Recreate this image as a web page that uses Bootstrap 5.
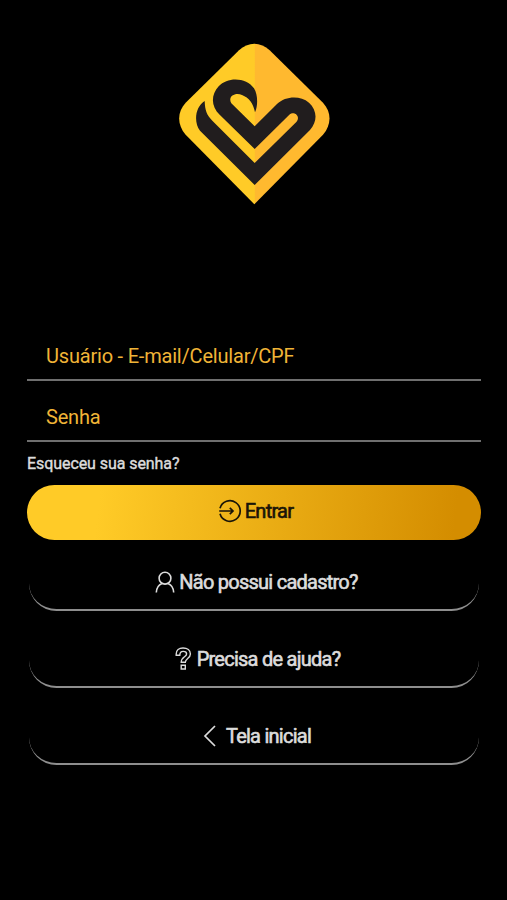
<!DOCTYPE html>
<html lang="pt-BR">
<head>
<meta charset="utf-8">
<meta name="viewport" content="width=device-width, initial-scale=1">
<title>Entrar</title>
<link href="https://cdn.jsdelivr.net/npm/bootstrap@5.3.0/dist/css/bootstrap.min.css" rel="stylesheet">
<style>
body{background:#000;font-family:Roboto,"Liberation Sans",sans-serif;color:#dcdcdc}
.screen{height:900px;padding:35px 26px 0 27px;overflow:hidden}
.brand-mark{display:block;margin:0 auto;width:170px;height:180px;transform:translateX(1px)}
.login-form{margin-top:117px}
.field{height:49px;border-bottom:2px solid #6f6f6f;padding:12px 0 0 19px;color:#f0b437;font-size:20px;line-height:24px;letter-spacing:-.2px}
.field + .field{margin-top:12px}
.field label{display:block;white-space:nowrap}
.forgot{display:block;margin-top:12px;font-size:16px;line-height:20px;letter-spacing:-.07px;color:#dcdcdc;-webkit-text-stroke:.4px #dcdcdc}
.pill{height:55px;border-radius:28px;font-size:20px;line-height:24px;padding:0;border:0;letter-spacing:-.75px}
.pill span{-webkit-text-stroke:.6px currentColor}
.pill-main{margin-top:11px;padding:0 0 4px 3px;background:linear-gradient(96deg,#ffcb27 16%,#d48d00 94%);color:#1a1508}
.pill-main:hover{color:#1a1508}
.pill-main span{margin-left:3px}
.pill-line{width:450px;margin:16px 2px 0;padding:0 0 2px 5px;color:#dcdcdc;border-bottom:2px solid #8e8e8e}
.pill-line + .pill-line{margin-top:22px}
.pill-line:hover{color:#dcdcdc}
.pill svg{flex:none;fill:none;stroke:currentColor}
.pill-help{padding-left:7px}
.pill-back{padding-left:6px}
.pill-back span{margin-left:9px}
.pill-help span{margin-left:5px}
</style>
</head>
<body>
<main class="screen">
  <svg class="brand-mark" viewBox="0 0 510 540" aria-label="Logo">
    <defs>
      <linearGradient id="fold" gradientUnits="userSpaceOnUse" x1="28" y1="0" x2="478" y2="0">
        <stop offset="0" stop-color="#ffcb27"/><stop offset=".5" stop-color="#ffcb27"/>
        <stop offset=".506" stop-color="#ffb92f"/><stop offset="1" stop-color="#ffb92f"/>
      </linearGradient>
    </defs>
    <path fill="url(#fold)" d="M207 46C234 20 272 20 299 46L459 203C485 231 485 269 459 299L253 508L47 299C21 269 21 231 47 203Z"/>
    <path fill="#211d1e" d="M255 232C264 212 264 179 252 160C231 128 174 123 146 154C122 181 123 214 149 239L254 342L358 239C374 226 393 245 379 261L254 384L127 257C110 240 105 226 104 198C76 215 70 261 90 287L254 450L420 285C444 258 441 225 417 203C390 181 347 183 321 207L254 274L184 205C172 184 196 171 216 180C237 188 250 205 255 232Z"/>
  </svg>
  <form class="login-form">
    <div class="field"><label>Usuário - E-mail/Celular/CPF</label></div>
    <div class="field"><label>Senha</label></div>
    <a class="forgot text-decoration-none">Esqueceu sua senha?</a>
    <button type="button" class="btn pill pill-main w-100 d-flex align-items-center justify-content-center">
      <svg width="24" height="24" viewBox="0 0 24 24" stroke-width="1.7"><path d="M2 9.2A10.3 10.3 0 1 1 2 14.8M1.2 12H15M11.8 8.8L15 12L11.8 15.2"/></svg>
      <span>Entrar</span>
    </button>
    <button type="button" class="btn pill pill-line d-flex align-items-center justify-content-center">
      <svg width="20" height="22" viewBox="0 0 20 22" stroke-width="1.6"><circle cx="10" cy="7.2" r="5.9"/><path d="M1.3 21.5C1.6 16 4.1 13.7 7 12.5M13 12.5C16 13.7 18.4 16 18.7 21.5"/></svg>
      <span class="ms-1">Não possui cadastro?</span>
    </button>
    <button type="button" class="btn pill pill-line pill-help d-flex align-items-center justify-content-center">
      <svg width="17" height="23" viewBox="0 0 17 23" stroke-width="1.4"><path d="M1.2 8.2V7C1.2 3.2 4 1 8 1C12.3 1 15.4 3.3 15.4 7C15.4 11.6 10.3 11.4 10.3 15.3H6.2C6.2 9.8 11.6 10 11.6 7C11.6 5.2 10.2 4.4 8.2 4.4C6 4.4 4.9 5.5 4.8 8.2ZM6.2 18.2H10.3V22H6.2Z"/></svg>
      <span>Precisa de ajuda?</span>
    </button>
    <button type="button" class="btn pill pill-line pill-back d-flex align-items-center justify-content-center">
      <svg width="14" height="22" viewBox="0 0 14 22" stroke-width="1.7"><path d="M12 1L2 11L12 21"/></svg>
      <span>Tela inicial</span>
    </button>
  </form>
</main>
<script src="https://cdn.jsdelivr.net/npm/bootstrap@5.3.0/dist/js/bootstrap.bundle.min.js"></script>
</body>
</html>
